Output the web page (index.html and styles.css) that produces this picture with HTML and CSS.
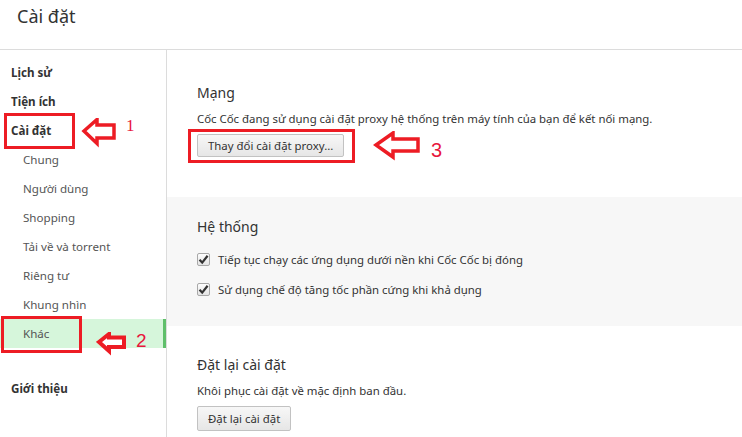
FILE: index.html
```html
<!DOCTYPE html>
<html lang="vi">
<head>
<meta charset="utf-8">
<title>Cài đặt</title>
<link rel="stylesheet" href="styles.css">
</head>
<body>
<header class="top">
  <h1 class="page-title">Cài đặt</h1>
</header>
<div class="main">
  <nav class="sidebar">
    <div class="nav-item top-item">Lịch sử</div>
    <div class="nav-item top-item">Tiện ích</div>
    <div class="nav-item top-item">Cài đặt</div>
    <div class="nav-item sub-item">Chung</div>
    <div class="nav-item sub-item">Người dùng</div>
    <div class="nav-item sub-item">Shopping</div>
    <div class="nav-item sub-item">Tải về và torrent</div>
    <div class="nav-item sub-item">Riêng tư</div>
    <div class="nav-item sub-item">Khung nhìn</div>
    <div class="nav-item sub-item active">Khác</div>
    <div class="nav-item top-item about">Giới thiệu</div>
  </nav>
  <div class="content">
    <section class="section net">
      <h2 class="sec-title">Mạng</h2>
      <p class="sec-text">Cốc Cốc đang sử dụng cài đặt proxy hệ thống trên máy tính của bạn để kết nối mạng.</p>
      <button class="btn">Thay đổi cài đặt proxy...</button>
    </section>
    <section class="section sys">
      <h2 class="sec-title">Hệ thống</h2>
      <label class="check-row"><span class="check"><svg width="11" height="11" viewBox="0 0 11 11"><path d="M1.5 5.8 L4.2 8.6 L9.6 1.8" fill="none" stroke="#333" stroke-width="2.2"/></svg></span>Tiếp tục chạy các ứng dụng dưới nền khi Cốc Cốc bị đóng</label>
      <label class="check-row"><span class="check"><svg width="11" height="11" viewBox="0 0 11 11"><path d="M1.5 5.8 L4.2 8.6 L9.6 1.8" fill="none" stroke="#333" stroke-width="2.2"/></svg></span>Sử dụng chế độ tăng tốc phần cứng khi khả dụng</label>
    </section>
    <section class="section reset">
      <h2 class="sec-title">Đặt lại cài đặt</h2>
      <p class="sec-text">Khôi phục cài đặt về mặc định ban đầu.</p>
      <button class="btn">Đặt lại cài đặt</button>
    </section>
  </div>
</div>

<div class="mark box1"></div>
<svg class="arrow arrow1" width="40" height="32" viewBox="0 0 40 32"><polygon points="3,13 16,1.5 16,7 33,7 33,20 16,20 16,25.5" fill="#fff" stroke="#ed1c24" stroke-width="3.5" stroke-linejoin="miter"/></svg>
<span class="num num1">1</span>

<div class="mark box2"></div>
<svg class="arrow arrow2" width="34" height="24" viewBox="0 0 34 24"><polygon points="3,10 13,2 13,5.5 28,5.5 28,15 13,15 13,19" fill="#fff" stroke="#ed1c24" stroke-width="4" stroke-linejoin="miter"/></svg>
<span class="num num2">2</span>

<div class="mark box3"></div>
<svg class="arrow arrow3" width="50" height="30" viewBox="0 0 50 30"><polygon points="3,14 20,2 20,8 45,8 45,20 20,20 20,26" fill="#fff" stroke="#ed1c24" stroke-width="3.5" stroke-linejoin="miter"/></svg>
<span class="num num3">3</span>
</body>
</html>
```

FILE: styles.css
```css
html, body {
  margin: 0;
  padding: 0;
  background: #fff;
}
body {
  position: relative;
  width: 742px;
  height: 437px;
  overflow: hidden;
  font-family: "Noto Sans", "Open Sans", sans-serif;
  font-size: 11.4px;
  color: #333;
}
.top {
  height: 50px;
  border-bottom: 1px solid #dcdcdc;
  box-sizing: border-box;
}
.page-title {
  margin: 0;
  padding: 4px 0 0 17px;
  font-size: 18px;
  font-weight: 400;
  line-height: 24px;
  color: #333;
}
.main {
  display: flex;
  height: 387px;
}
.sidebar {
  width: 166px;
  border-right: 1px solid #dcdcdc;
  padding-top: 8px;
  flex: none;
}
.nav-item {
  height: 29px;
  line-height: 29px;
  white-space: nowrap;
  font-size: 11.6px;
}
.top-item {
  padding-left: 11px;
  font-weight: 700;
  color: #333;
}
.sub-item {
  padding-left: 23px;
  color: #555;
}
.active {
  background: #d6f6db;
  box-shadow: inset -3px 0 0 #5fbf6a;
}
.about {
  margin-top: 26px;
}
.content {
  flex: 1;
}
.section {
  padding-left: 30px;
}
.net {
  height: 147px;
  box-sizing: border-box;
  padding-top: 33px;
}
.sys {
  background: #f7f7f7;
  height: 129px;
  box-sizing: border-box;
  padding-top: 20px;
}
.reset {
  padding-top: 29px;
}
.sec-title {
  margin: 0;
  font-size: 14px;
  font-weight: 400;
  line-height: 20px;
  color: #333;
}
.sec-text {
  margin: 8px 0 0;
  line-height: 16px;
}
.btn {
  display: block;
  margin-top: 7px;
  height: 23px;
  padding: 0 10px;
  font-family: inherit;
  font-size: 11.4px;
  color: #333;
  border: 1px solid #c2c2c2;
  border-radius: 2px;
  background: linear-gradient(#f7f7f7, #e6e6e6);
}
.reset .btn {
  height: 25px;
}
.check-row {
  display: flex;
  align-items: center;
  height: 30px;
  gap: 8px;
}
.sys .sec-title + .check-row {
  margin-top: 7px;
}
.check {
  width: 11px;
  height: 11px;
  border: 1px solid #a8a8a8;
  border-radius: 2px;
  background: linear-gradient(#fdfdfd, #e4e4e4);
  display: flex;
  align-items: center;
  justify-content: center;
}

/* annotation overlays */
.mark {
  position: absolute;
  border: 3px solid #ed1c24;
  box-sizing: border-box;
}
.box1 { left: 4px; top: 113px; width: 71px; height: 36px; }
.box2 { left: 1px; top: 316px; width: 81px; height: 37px; }
.box3 { left: 188px; top: 129px; width: 167px; height: 34px; }
.arrow { position: absolute; }
.arrow1 { left: 81px; top: 118px; }
.arrow2 { left: 96px; top: 332px; }
.arrow3 { left: 373px; top: 131px; }
.num {
  position: absolute;
  color: #e8173c;
  font-family: "Liberation Sans", sans-serif;
  line-height: 1;
}
.num1 { left: 126px; top: 117px; font-size: 17px; font-family: "Liberation Serif", serif; }
.num2 { left: 136px; top: 331px; font-size: 19px; }
.num3 { left: 431px; top: 140px; font-size: 20px; }
```
